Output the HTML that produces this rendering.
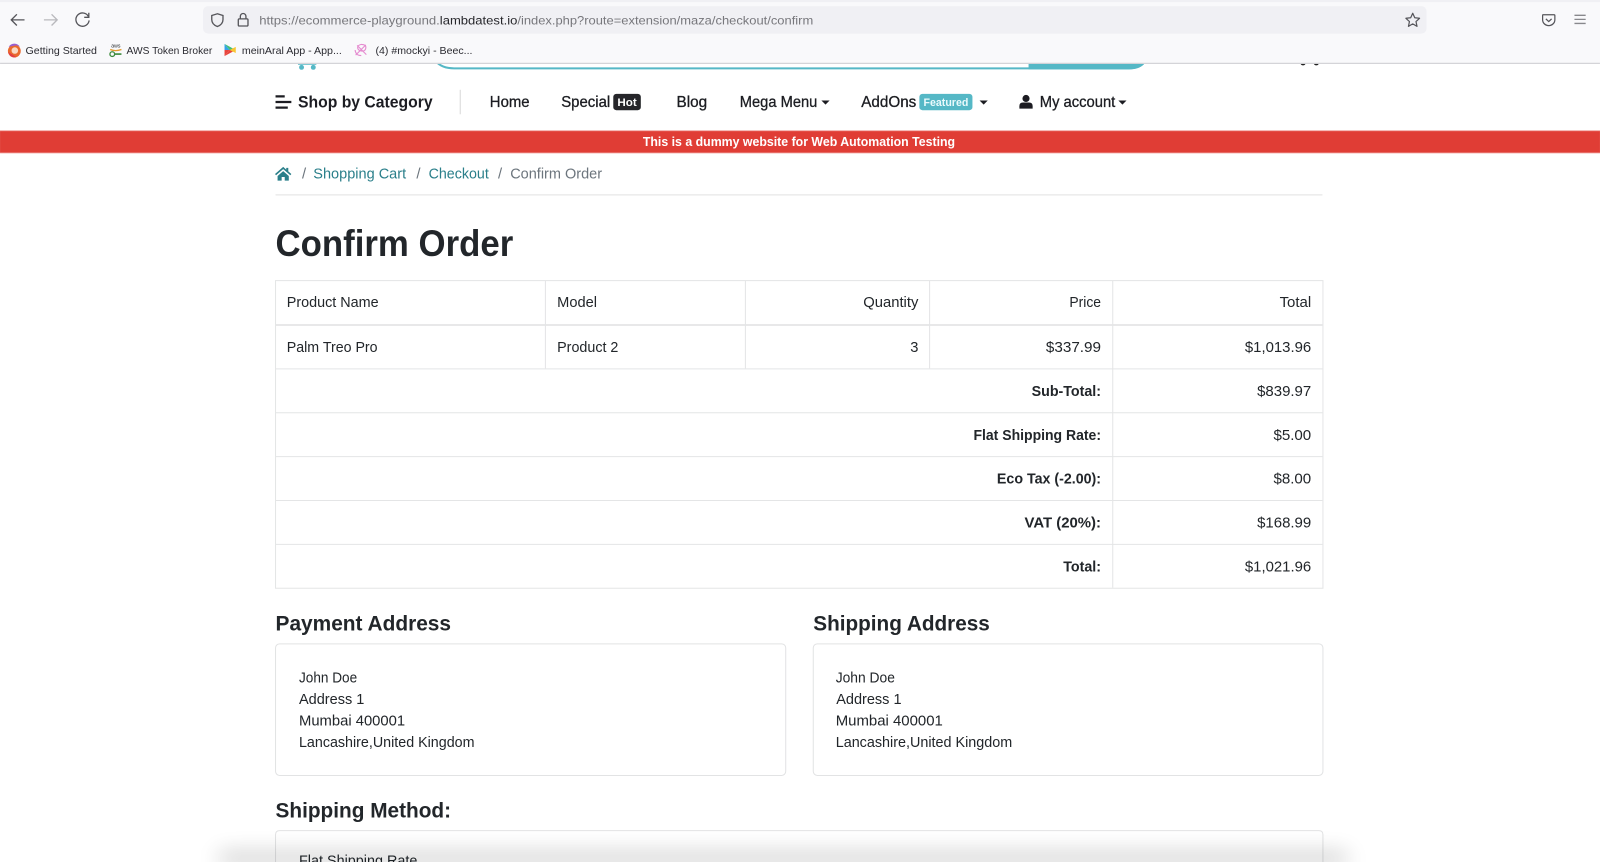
<!DOCTYPE html>
<html lang="en"><head><meta charset="utf-8"><title>Confirm Order</title>
<style>
html,body{margin:0;padding:0;background:#fff;width:1600px;height:862px;overflow:hidden}
svg{display:block}
text{font-family:"Liberation Sans",sans-serif;fill:#212529;font-size:14.6px}
.b{font-weight:700}
.u{font-size:12px;fill:#77777c}
.m{font-size:10px;fill:#2b2b30}
.n{font-size:15px;fill:#1c1f22;stroke:#1c1f22;stroke-width:.3px}
.a{fill:#2a7f8a}
.g{fill:#6c757d}
.h{font-size:21px;font-weight:700}
</style></head><body>
<svg xmlns="http://www.w3.org/2000/svg" width="1600" height="862" viewBox="0 0 1568 844.8">
<defs><filter id="sh" x="-10%" y="-1000%" width="120%" height="2100%"><feGaussianBlur stdDeviation="11"/></filter>
<filter id="s"><feGaussianBlur stdDeviation=".35"/></filter></defs>
<g filter="url(#s)">
<rect width="1568" height="844.800" fill="#fff"/>

<!-- partially hidden page header -->
<path d="M427 60q6 7 18 7H1106q12 0 16-7" fill="#fff" stroke="#55b8c6" stroke-width="2"/>
<path d="M1008 60H1123q-4 8-17 8H1008z" fill="#55b8c6"/>
<path d="M292 63h18" stroke="#55b8c6" stroke-width=".8"/>
<circle cx="295.500" cy="66" r="2.400" fill="#55b8c6"/><circle cx="307" cy="66" r="2.400" fill="#55b8c6"/>
<circle cx="1277" cy="61.500" r="2.600" fill="#222"/><circle cx="1290" cy="61.500" r="2.600" fill="#222"/>

<!-- browser chrome -->
<rect width="1568" height="62" fill="#f9f9fb"/>
<rect width="1568" height="2" fill="#f0f0f4"/>
<rect y="61.500" width="1568" height="1.200" fill="#d4d4d8"/>
<rect x="199" y="6" width="1199" height="27" rx="5" fill="#f0f0f4"/>
<path d="M24 19.500H11M16.500 14l-5.500 5.500 5.500 5.500" fill="none" stroke="#55555a" stroke-width="1.300"/>
<path d="M43 19.500H56M50.500 14l5.500 5.500-5.500 5.500" fill="none" stroke="#b9b9bd" stroke-width="1.300"/>
<path d="M86.500 16a6.500 6.500 0 1 0 .8 4M87 12.500V17h-4.500" fill="none" stroke="#55555a" stroke-width="1.300"/>
<path d="M213 13.500l5.500 1.700v4c0 3.600-2.500 5.600-5.500 6.800-3-1.200-5.500-3.200-5.500-6.800v-4z" fill="none" stroke="#55555a" stroke-width="1.300"/>
<rect x="233.500" y="18.500" width="9.500" height="7" rx="1" fill="none" stroke="#55555a" stroke-width="1.300"/>
<path d="M235.500 18.500v-2.500a2.700 2.700 0 0 1 5.500 0v2.500" fill="none" stroke="#55555a" stroke-width="1.300"/>
<text class="u" x="254" y="24" textLength="177" lengthAdjust="spacingAndGlyphs">https://ecommerce-playground.</text>
<text class="u" x="431" y="24" textLength="76" lengthAdjust="spacingAndGlyphs" style="fill:#26262b">lambdatest.io</text>
<text class="u" x="507" y="24" textLength="290" lengthAdjust="spacingAndGlyphs">/index.php?route=extension/maza/checkout/confirm</text>
<path d="M1384.500 13l2 4.400 4.700.5-3.500 3.200 1 4.700-4.200-2.400-4.200 2.400 1-4.700-3.500-3.200 4.700-.5z" fill="none" stroke="#55555a" stroke-width="1.200" stroke-linejoin="round"/>
<path d="M1512 14.500h11q.8 0 .8 .8v4a6 5.800 0 0 1-12 0v-4q0-.8 .2-.8z" fill="none" stroke="#55555a" stroke-width="1.200"/>
<path d="M1515 18.500l2.800 2.600 2.800-2.600" fill="none" stroke="#55555a" stroke-width="1.200"/>
<path d="M1543 15h11M1543 19h11M1543 23h11" stroke="#88888c" stroke-width="1.300"/>

<!-- bookmarks -->
<circle cx="14" cy="50" r="6.300" fill="#ea6a2f"/><circle cx="14.500" cy="49.500" r="3.200" fill="#f9d9c4"/>
<path d="M8.500 46a6.300 6.300 0 0 1 11 0q-3-2.200-5.500-1.200-3 .5-5.500 1.200z" fill="#9a5fd0"/><path d="M8 51a6.300 6.300 0 0 0 8 5l-3-2z" fill="#e23c44"/>
<text class="m" x="25" y="53" textLength="70" lengthAdjust="spacingAndGlyphs">Getting Started</text>
<text x="109" y="46.500" textLength="9" lengthAdjust="spacingAndGlyphs" style="font-size:5.500px">aws</text>
<path d="M108 48.500q5 2.200 11 0" fill="none" stroke="#e39a2e" stroke-width="1.300"/><circle cx="110" cy="53" r="2.300" fill="none" stroke="#3d8a3d" stroke-width="1.300"/><path d="M112 53h7" stroke="#3d8a3d" stroke-width="1.600"/>
<text class="m" x="124" y="53" textLength="84" lengthAdjust="spacingAndGlyphs">AWS Token Broker</text>
<path d="M220 43v6h5z" fill="#36a3e8"/><path d="M220 49v6l5-6z" fill="#e8453c"/><path d="M220 43l11 6h-6z" fill="#3fbf7a"/><path d="M220 55l11-6h-6z" fill="#e8453c"/><path d="M225 49l6-3v6z" fill="#f7c531"/>
<text class="m" x="237" y="53" textLength="98" lengthAdjust="spacingAndGlyphs">meinAral App - App...</text>
<path d="M348.500 54l10-10M350 44.500l9 9M354 43.500q5 0 4.500 3.500t-4 3-4-3 3.500-3.500zM348 49q.5 5.500 6 5.500" fill="none" stroke="#e58bd0" stroke-width="1.100"/>
<text class="m" x="368" y="53" textLength="95" lengthAdjust="spacingAndGlyphs">(4) #mockyi - Beec...</text>

<!-- navigation -->
<path d="M270 94.500h9M270 100h15.500M270 105.500h12" stroke="#1c1f22" stroke-width="2.200"/>
<text class="n b" style="font-size:16px;stroke-width:0" x="292" y="105.500" textLength="132" lengthAdjust="spacingAndGlyphs">Shop by Category</text>
<rect x="450.500" y="88" width="1" height="24" fill="#d8d8d8"/>
<text class="n" x="480" y="105" textLength="39" lengthAdjust="spacingAndGlyphs">Home</text>
<text class="n" x="550" y="105" textLength="48" lengthAdjust="spacingAndGlyphs">Special</text>
<rect x="601" y="92" width="27" height="16" rx="3" fill="#25282b"/>
<text class="b" style="font-size:10.500px;fill:#fff" x="605" y="104" textLength="19" lengthAdjust="spacingAndGlyphs">Hot</text>
<text class="n" x="663" y="105" textLength="30" lengthAdjust="spacingAndGlyphs">Blog</text>
<text class="n" x="725" y="105" textLength="76" lengthAdjust="spacingAndGlyphs">Mega Menu</text>
<path d="M805 98.500h8l-4 4z" fill="#1c1f22"/>
<text class="n" x="844" y="105" textLength="54" lengthAdjust="spacingAndGlyphs">AddOns</text>
<rect x="901" y="92" width="52" height="16" rx="3" fill="#55b8c6"/>
<text class="b" style="font-size:10.500px;fill:#eafafc" x="905" y="104" textLength="44" lengthAdjust="spacingAndGlyphs">Featured</text>
<path d="M960 98.500h8l-4 4z" fill="#1c1f22"/>
<circle cx="1005.500" cy="96.500" r="3.500" fill="#1c1f22"/><path d="M999 106.500v-2.500q0-3.500 3.500-3.500h6q3.500 0 3.500 3.500v2.500z" fill="#1c1f22"/>
<text class="n" x="1019" y="105" textLength="74" lengthAdjust="spacingAndGlyphs">My account</text>
<path d="M1096 98.500h8l-4 4z" fill="#1c1f22"/>

<!-- notice bar -->
<rect y="128" width="1568" height="22" fill="#e03e36"/>
<rect y="127.800" width="1568" height=".8" fill="#ec8c87"/><rect y="149.400" width="1568" height=".8" fill="#ec8c87"/>
<text class="b" style="font-size:12.500px;fill:#fff" x="630" y="143" textLength="306" lengthAdjust="spacingAndGlyphs">This is a dummy website for Web Automation Testing</text>

<!-- breadcrumb -->
<path d="M277.500 163.500l-8 7 1 1.200 7-6 7 6 1-1.200-3-2.600v-3.400h-2v1.700zM272 172.500l5.500-4.800 5.500 4.800v4.500h-4v-3.500h-3v3.500h-4z" fill="#2a7f8a"/>
<text class="g" x="296" y="175">/</text>
<text class="a" x="307" y="175" textLength="91" lengthAdjust="spacingAndGlyphs">Shopping Cart</text>
<text class="g" x="408" y="175">/</text>
<text class="a" x="420" y="175" textLength="59" lengthAdjust="spacingAndGlyphs">Checkout</text>
<text class="g" x="488" y="175">/</text>
<text class="g" x="500" y="175" textLength="90" lengthAdjust="spacingAndGlyphs">Confirm Order</text>
<rect x="270" y="190.500" width="1026" height="1" fill="#e2e2e2"/>

<text class="b" style="font-size:36.500px;fill:#212529" x="270" y="251" textLength="233" lengthAdjust="spacingAndGlyphs">Confirm Order</text>

<!-- order table -->
<g fill="none" stroke="#e4e5e6" stroke-width="1">
<rect x="270" y="275" width="1026.500" height="301.500"/>
<path d="M270 361.500H1296M270 404.500H1296M270 447.500H1296M270 490.500H1296M270 533.500H1296"/>
<path d="M534.500 275V361M730.500 275V361M911 275V361M1090.500 275V576"/>
<path d="M270 318.500H1296" stroke-width="1.800"/>
</g>
<text x="281" y="301" textLength="90" lengthAdjust="spacingAndGlyphs">Product Name</text>
<text x="546" y="301" textLength="39" lengthAdjust="spacingAndGlyphs">Model</text>
<text x="846" y="301" textLength="54" lengthAdjust="spacingAndGlyphs">Quantity</text>
<text x="1048" y="301" textLength="31" lengthAdjust="spacingAndGlyphs">Price</text>
<text x="1254" y="301" textLength="31" lengthAdjust="spacingAndGlyphs">Total</text>
<text x="281" y="345" textLength="89" lengthAdjust="spacingAndGlyphs">Palm Treo Pro</text>
<text x="546" y="345" textLength="60" lengthAdjust="spacingAndGlyphs">Product 2</text>
<text x="892" y="345" textLength="8" lengthAdjust="spacingAndGlyphs">3</text>
<text x="1025" y="345" textLength="54" lengthAdjust="spacingAndGlyphs">$337.99</text>
<text x="1220" y="345" textLength="65" lengthAdjust="spacingAndGlyphs">$1,013.96</text>
<text class="b" x="1011" y="388" textLength="68" lengthAdjust="spacingAndGlyphs">Sub-Total:</text>
<text x="1232" y="388" textLength="53" lengthAdjust="spacingAndGlyphs">$839.97</text>
<text class="b" x="954" y="431" textLength="125" lengthAdjust="spacingAndGlyphs">Flat Shipping Rate:</text>
<text x="1248" y="431" textLength="37" lengthAdjust="spacingAndGlyphs">$5.00</text>
<text class="b" x="977" y="474" textLength="102" lengthAdjust="spacingAndGlyphs">Eco Tax (-2.00):</text>
<text x="1248" y="474" textLength="37" lengthAdjust="spacingAndGlyphs">$8.00</text>
<text class="b" x="1004" y="517" textLength="75" lengthAdjust="spacingAndGlyphs">VAT (20%):</text>
<text x="1232" y="517" textLength="53" lengthAdjust="spacingAndGlyphs">$168.99</text>
<text class="b" x="1042" y="560" textLength="37" lengthAdjust="spacingAndGlyphs">Total:</text>
<text x="1220" y="560" textLength="65" lengthAdjust="spacingAndGlyphs">$1,021.96</text>

<!-- addresses -->
<text class="h" x="270" y="618" textLength="172" lengthAdjust="spacingAndGlyphs">Payment Address</text>
<text class="h" x="797" y="618" textLength="173" lengthAdjust="spacingAndGlyphs">Shipping Address</text>
<rect x="270" y="631" width="500" height="129" rx="4" fill="#fff" stroke="#e2e3e4"/>
<rect x="797" y="631" width="499.500" height="129" rx="4" fill="#fff" stroke="#e2e3e4"/>
<text x="293" y="669" textLength="57" lengthAdjust="spacingAndGlyphs">John Doe</text>
<text x="293" y="690" textLength="64" lengthAdjust="spacingAndGlyphs">Address 1</text>
<text x="293" y="711" textLength="104" lengthAdjust="spacingAndGlyphs">Mumbai 400001</text>
<text x="293" y="732" textLength="172" lengthAdjust="spacingAndGlyphs">Lancashire,United Kingdom</text>
<text x="819" y="669" textLength="58" lengthAdjust="spacingAndGlyphs">John Doe</text>
<text x="819.500" y="690" textLength="64" lengthAdjust="spacingAndGlyphs">Address 1</text>
<text x="819" y="711" textLength="105" lengthAdjust="spacingAndGlyphs">Mumbai 400001</text>
<text x="819" y="732" textLength="173" lengthAdjust="spacingAndGlyphs">Lancashire,United Kingdom</text>

<!-- shipping method -->
<text class="h" x="270" y="801" textLength="172" lengthAdjust="spacingAndGlyphs">Shipping Method:</text>
<path d="M270 844.800V818q0-4 4-4H1292.500q4 0 4 4V844.800" fill="#fff" stroke="#e2e3e4"/>
<text x="293" y="844" textLength="116" lengthAdjust="spacingAndGlyphs" style="transform:translateY(4px)">Flat Shipping Rate</text>

<!-- screenshot bottom shadow -->
<rect x="215" y="838" width="1105" height="6.800" fill="#000" opacity=".38" filter="url(#sh)"/>
</g>
</svg>
</body></html>
